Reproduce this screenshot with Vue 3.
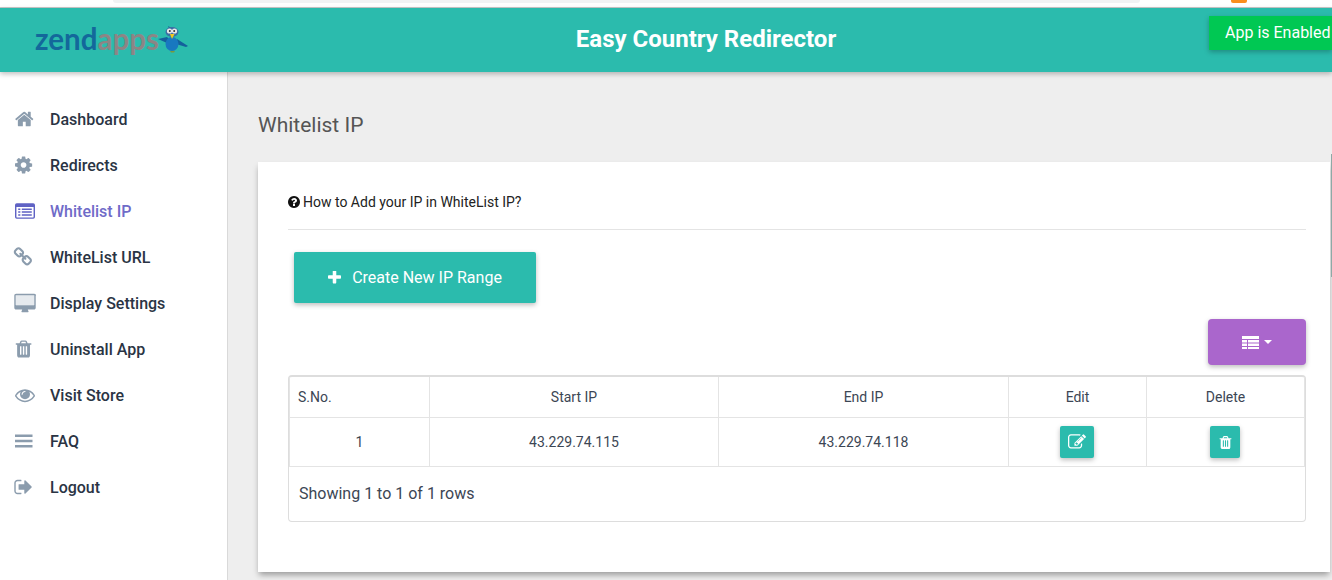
<template>
  <div class="page">
    <div class="topstrip">
      <span class="urlbar"></span>
      <span class="rss"></span>
    </div>
    <header class="topbar">
      <div class="logo">
        <span class="zend">zend</span><span class="apps">apps</span>
        <svg class="bird" width="32" height="30" viewBox="0 0 32 30">
          <path d="M1 16 L10 14 L14 18 L10 20 Z" fill="#14609c" />
          <path d="M20 16 L31 23 L29 24 L19 21 Z" fill="#14609c" />
          <path d="M11 3 L16 6 L13 8 Z" fill="#14609c" />
          <ellipse cx="15" cy="21" rx="6.5" ry="7" fill="#1878c0" />
          <ellipse cx="15" cy="9" rx="6.5" ry="5" fill="#3b6ea5" />
          <circle cx="12.5" cy="8" r="2.6" fill="#e8e8e8" />
          <circle cx="17.5" cy="8" r="2.6" fill="#e8e8e8" />
          <circle cx="12.8" cy="8" r="1" fill="#333" />
          <circle cx="17.2" cy="8" r="1" fill="#333" />
          <path d="M13 11 L17.5 11 L15 16 Z" fill="#f2c81e" />
          <path d="M13 28 L18 28 L17 29.5 L14 29.5 Z" fill="#7b9a3c" />
        </svg>
      </div>
      <h1>Easy Country Redirector</h1>
      <div class="status">App is Enabled</div>
    </header>
    <div class="body">
      <nav class="sidebar">
        <a v-for="item in menu" :key="item.label" class="item" :class="{ active: item.active }">
          <span class="ico">
            <svg width="20" height="20" :viewBox="item.box">
              <rect v-if="item.screen" x="96" y="128" width="1664" height="896" fill="#e6eaee" />
              <path :d="item.d" />
            </svg>
          </span>
          <span>{{ item.label }}</span>
        </a>
      </nav>
      <main class="main">
        <h2>Whitelist IP</h2>
        <section class="card">
          <p class="help">
            <svg width="12" height="12" viewBox="128 128 1536 1536"><path :d="icons.question" fill="#111" /></svg>
            How to Add your IP in WhiteList IP?
          </p>
          <button class="create">
            <svg width="13" height="13" viewBox="192 192 1408 1408"><path :d="icons.plus" fill="#fff" /></svg>
            Create New IP Range
          </button>
          <div class="tools">
            <button class="columns">
              <svg width="17" height="13" viewBox="0 0 17 13">
                <path d="M0 0 H17 V3 H0 Z M0 4 H5 V6.5 H0 Z M6 4 H17 V6.5 H6 Z M0 7.5 H5 V10 H0 Z M6 7.5 H17 V10 H6 Z M0 11 H5 V13 H0 Z M6 11 H17 V13 H6 Z" fill="#fff" />
              </svg>
              <span class="caret"></span>
            </button>
          </div>
          <div class="tablebox">
            <table>
              <colgroup>
                <col style="width: 140px" />
                <col style="width: 289px" />
                <col style="width: 290px" />
                <col style="width: 138px" />
                <col style="width: 158px" />
              </colgroup>
              <thead>
                <tr>
                  <th class="left">S.No.</th>
                  <th>Start IP</th>
                  <th>End IP</th>
                  <th>Edit</th>
                  <th>Delete</th>
                </tr>
              </thead>
              <tbody>
                <tr v-for="row in rows" :key="row.no">
                  <td>{{ row.no }}</td>
                  <td>{{ row.start }}</td>
                  <td>{{ row.end }}</td>
                  <td>
                    <button class="act edit">
                      <svg width="18" height="18" viewBox="0 0 1792 1792"><path :d="icons.edit" fill="#fff" /></svg>
                    </button>
                  </td>
                  <td>
                    <button class="act del">
                      <svg width="15" height="15" viewBox="0 0 1792 1792"><path :d="icons.trash" fill="#fff" /></svg>
                    </button>
                  </td>
                </tr>
              </tbody>
            </table>
            <p class="count">Showing 1 to 1 of 1 rows</p>
          </div>
        </section>
      </main>
    </div>
    <div class="scrollmark"></div>
  </div>
</template>

<script setup>
const icons = {
  home: 'M1472 992v480q0 26-19 45t-45 19h-384v-384h-256v384h-384q-26 0-45-19t-19-45v-480q0-1 .5-3t.5-3l575-474 575 474q1 2 1 6zm223-69l-62 74q-8 9-21 11h-3q-13 0-21-7l-692-577-692 577q-12 8-24 7-13-2-21-11l-62-74q-8-10-7-23.5t11-21.5l719-599q32-26 76-26t76 26l244 204v-195q0-14 9-23t23-9h192q14 0 23 9t9 23v408l219 182q10 8 11 21.5t-7 23.5z',
  cog: 'M1152 896q0-106-75-181t-181-75-181 75-75 181 75 181 181 75 181-75 75-181zm512-109v222q0 12-8 23t-20 13l-185 28q-19 54-39 91 35 50 107 138 10 12 10 25t-9 23q-27 37-99 108t-94 71q-12 0-26-9l-138-108q-44 23-91 38-16 136-29 186-7 28-36 28h-222q-14 0-24.5-8.5t-11.5-21.5l-28-184q-49-16-90-37l-141 107q-10 9-25 9-14 0-25-11-126-114-165-168-7-10-7-23 0-12 8-23 15-21 51-66.5t54-70.5q-27-50-41-99l-183-27q-13-2-21-12.5t-8-23.5v-222q0-12 8-23t19-13l186-28q14-46 39-92-40-57-107-138-10-12-10-24 0-10 9-23 26-36 98.5-107.5t94.5-71.5q13 0 26 10l138 107q44-23 91-38 16-136 29-186 7-28 36-28h222q14 0 24.5 8.5t11.5 21.5l28 184q49 16 90 37l142-107q9-9 24-9 13 0 25 10 129 119 165 170 7 8 7 22 0 12-8 23-15 21-51 66.5t-54 70.5q26 50 41 98l183 28q13 2 21 12.5t8 23.5z',
  list: 'M160 192H1632Q1792 192 1792 352V1440Q1792 1600 1632 1600H160Q0 1600 0 1440V352Q0 192 160 192Z M128 544V1440Q128 1472 160 1472H1632Q1664 1472 1664 1440V544Z M288 672h192v128h-192z M608 672h896v128h-896z M288 928h192v128h-192z M608 928h896v128h-896z M288 1184h192v128h-192z M608 1184h896v128h-896z',
  link: 'M1456 1216q0-40-28-68l-208-208q-28-28-68-28-42 0-72 32 3 3 19 18.5t21.5 21.5 15 19 13 25.5 3.5 27.5q0 40-28 68t-68 28q-15 0-27.5-3.5t-25.5-13-19-15-21.5-21.5-18.5-19q-33 31-33 73 0 40 28 68l206 207q27 27 68 27 40 0 68-26l147-146q28-28 28-67zm-703-705q0-40-28-68l-206-207q-28-28-68-28-39 0-68 27l-147 146q-28 28-28 67 0 40 28 68l208 208q27 27 68 27 42 0 72-31-3-3-19-18.5t-21.5-21.5-15-19-13-25.5-3.5-27.5q0-40 28-68t68-28q15 0 27.5 3.5t25.5 13 19 15 21.5 21.5 18.5 19q33-31 33-73zm895 705q0 120-85 203l-147 146q-83 83-203 83-121 0-204-85l-206-207q-83-83-83-203 0-123 88-209l-88-88q-86 88-208 88-120 0-204-84l-208-208q-84-84-84-204t85-203l147-146q83-83 203-83 121 0 204 85l206 207q83 83 83 203 0 123-88 209l88 88q86-88 208-88 120 0 204 84l208 208q84 84 84 204z',
  desktop: 'M1728 992v-832q0-13-9.5-22.5t-22.5-9.5h-1600q-13 0-22.500 9.500t-9.500 22.500v832q0 13 9.500 22.500t22.500 9.500h1600q13 0 22.500-9.500t9.500-22.500zm128-832v1088q0 66-47 113t-113 47h-544q0 37 16 77.500t32 71 16 43.500q0 26-19 45t-45 19h-512q-26 0-45-19t-19-45q0-14 16-44t32-70 16-78h-544q-66 0-113-47t-47-113v-1088q0-66 47-113t113-47h1632q66 0 113 47t47 113z',
  trash: 'M704 1376v-704q0-14-9-23t-23-9h-64q-14 0-23 9t-9 23v704q0 14 9 23t23 9h64q14 0 23-9t9-23zm256 0v-704q0-14-9-23t-23-9h-64q-14 0-23 9t-9 23v704q0 14 9 23t23 9h64q14 0 23-9t9-23zm256 0v-704q0-14-9-23t-23-9h-64q-14 0-23 9t-9 23v704q0 14 9 23t23 9h64q14 0 23-9t9-23zm-544-992h448l-48-117q-7-9-17-11h-317q-10 2-17 11zm928 32v64q0 14-9 23t-23 9h-96v948q0 83-47 143.500t-113 60.500h-832q-66 0-113-58.500t-47-141.500v-952h-96q-14 0-23-9t-9-23v-64q0-14 9-23t23-9h309l70-167q15-37 54-63t79-26h320q40 0 79 26t54 63l70 167h309q14 0 23 9t9 23z',
  eye: 'M1664 960q-152-236-381-353 61 104 61 225 0 185-131.500 316.500t-316.500 131.500-316.500-131.500-131.500-316.500q0-121 61-225-229 117-381 353 133 205 333.500 326.500t434.500 121.500 434.500-121.500 333.500-326.500zm-720-384q0-20-14-34t-34-14q-125 0-214.500 89.500t-89.500 214.500q0 20 14 34t34 14 34-14 14-34q0-86 61-147t147-61q20 0 34-14t14-34zm848 384q0 34-20 69-140 230-376.500 368.500t-499.500 138.500-499.500-139-376.500-368q-20-35-20-69t20-69q140-229 376.500-368t499.500-139 499.500 139 376.500 368q20 35 20 69z',
  bars: 'M0 320H1568V544H0Z M0 784H1568V1008H0Z M0 1248H1568V1472H0Z',
  signout: 'M704 1440q0 4 1 20t.5 26.500-3 23.500-10 19.500-20.500 6.500h-320q-119 0-203.500-84.500t-84.500-203.500v-704q0-119 84.500-203.500t203.500-84.500h320q13 0 22.500 9.500t9.500 22.500q0 4 1 20t.5 26.500-3 23.500-10 19.500-20.500 6.500h-320q-66 0-113 47t-47 113v704q0 66 47 113t113 47h312l11.500 1 11.500 3 8 5.500 7 9 2 13.500zm928-544q0 26-19 45l-544 544q-19 19-45 19t-45-19-19-45v-288h-448q-26 0-45-19t-19-45v-384q0-26 19-45t45-19h448v-288q0-26 19-45t45-19 45 19l544 544q19 19 19 45z',
  question: 'M1024 1376v-192q0-14-9-23t-23-9h-192q-14 0-23 9t-9 23v192q0 14 9 23t23 9h192q14 0 23-9t9-23zm256-672q0-88-55.500-163t-138.500-116-170-41q-243 0-371 213-15 24 8 42l132 100q7 6 19 6 16 0 25-12 53-68 86-92 34-24 86-24 48 0 85.500 26t37.500 59q0 38-20 61t-68 45q-63 28-115.500 86.500t-52.500 125.500v36q0 14 9 23t23 9h192q14 0 23-9t9-23q0-19 21.500-49.500t54.500-49.500q32-18 49-28.500t46-35 44.500-48 28-60.500 12.500-81zm384 192q0 209-103 385.500t-279.500 279.500-385.500 103-385.500-103-279.500-279.500-103-385.500 103-385.500 279.500-279.500 385.500-103 385.500 103 279.500 279.500 103 385.500z',
  plus: 'M1600 736v192q0 40-28 68t-68 28h-416v416q0 40-28 68t-68 28h-192q-40 0-68-28t-28-68v-416h-416q-40 0-68-28t-28-68v-192q0-40 28-68t68-28h416v-416q0-40 28-68t68-28h192q40 0 68 28t28 68v416h416q40 0 68 28t28 68z',
  edit: 'M888 1184l116-116-152-152-116 116v56h96v96h56zm440-720q-16-16-33 1l-350 350q-17 17-1 33t33-1l350-350q17-17 1-33zm80 594v190q0 119-84.500 203.500t-203.500 84.500h-832q-119 0-203.500-84.500t-84.500-203.500v-832q0-119 84.500-203.500t203.500-84.500h832q63 0 117 25 15 7 18 23 3 17-9 29l-49 49q-14 14-32 8-23-6-45-6h-832q-66 0-113 47t-47 113v832q0 66 47 113t113 47h832q66 0 113-47t47-113v-126q0-13 9-22l64-64q15-15 35-7t20 29zm-96-738l288 288-672 672h-288v-288zm444 132l-92 92-288-288 92-92q28-28 68-28t68 28l152 152q28 28 28 68t-28 68z',
}

const menu = [
  { label: 'Dashboard', box: '64 0 1792 1792', d: icons.home },
  { label: 'Redirects', box: '128 0 1792 1792', d: icons.cog },
  { label: 'Whitelist IP', box: '0 0 1792 1792', d: icons.list, active: true },
  { label: 'WhiteList URL', box: '128 0 1792 1792', d: icons.link },
  { label: 'Display Settings', box: '0 -64 1792 1792', d: icons.desktop, screen: true },
  { label: 'Uninstall App', box: '128 0 1792 1792', d: icons.trash },
  { label: 'Visit Store', box: '0 0 1792 1792', d: icons.eye },
  { label: 'FAQ', box: '0 0 1792 1792', d: icons.bars },
  { label: 'Logout', box: '128 0 1792 1792', d: icons.signout },
]

const rows = [{ no: 1, start: '43.229.74.115', end: '43.229.74.118' }]
</script>

<style>
html,
body {
  margin: 0;
  height: 100%;
  overflow: hidden;
}
</style>

<style scoped>
.page {
  position: relative;
  width: 1332px;
  height: 580px;
  overflow: hidden;
  display: flex;
  flex-direction: column;
  font-family: Roboto, "Liberation Sans", sans-serif;
  background: #fff;
}

.topstrip {
  height: 7px;
  flex: none;
  display: flex;
  justify-content: space-between;
  background: #fff;
  border-bottom: 1px solid #c9c9c9;
}

.urlbar {
  width: 1027px;
  height: 3px;
  margin-left: 113px;
  background: #f1f3f4;
  border-radius: 0 0 12px 12px;
}

.rss {
  width: 16px;
  height: 3px;
  margin-right: 85px;
  background: #f98e1d;
  border-radius: 0 0 2px 2px;
}

.topbar {
  height: 64px;
  flex: none;
  position: relative;
  z-index: 2;
  background: #2bbbad;
  box-shadow: 0 2px 5px rgba(0, 0, 0, 0.26);
  display: flex;
  align-items: center;
  justify-content: center;
}

.topbar h1 {
  margin: 0 0 2px 80px;
  font-size: 24px;
  font-weight: 700;
  color: #fff;
}

.logo {
  position: absolute;
  left: 35px;
  top: 14px;
  display: flex;
  align-items: center;
  font-family: Lato, sans-serif;
  font-size: 29.5px;
  line-height: 34px;
  font-weight: 700;
}

.zend {
  color: #13689b;
}

.apps {
  color: #8c8585;
}

.bird {
  margin-left: -2px;
  margin-top: -3px;
}

.status {
  position: absolute;
  right: 0;
  top: 8px;
  width: 123px;
  height: 34px;
  box-sizing: border-box;
  padding-left: 16px;
  line-height: 33px;
  font-size: 16px;
  color: #fff;
  background: #00c853;
  white-space: nowrap;
  box-shadow: 0 2px 5px rgba(0, 0, 0, 0.26);
}

.body {
  flex: 1;
  display: flex;
  min-height: 0;
}

.sidebar {
  width: 227px;
  flex: none;
  padding-top: 24px;
  background: #fff;
  border-right: 1px solid #d9d9d9;
}

.item {
  height: 46px;
  display: flex;
  align-items: center;
  padding-left: 15px;
  font-size: 16px;
  font-weight: 500;
  color: #2a3444;
}

.item.active {
  color: #6f6bc8;
}

.ico {
  width: 35px;
  height: 20px;
  flex: none;
}

.ico svg {
  display: block;
  overflow: visible;
  fill: #8b9cad;
}

.item.active .ico svg {
  fill: #5f62c4;
}

.main {
  flex: 1;
  min-width: 0;
  padding-left: 30px;
  background: #eeeeee;
}

h2 {
  margin: 42px 0 25px;
  font-size: 21px;
  line-height: 23px;
  font-weight: 400;
  color: #555;
}

.card {
  width: 1072px;
  height: 410px;
  box-sizing: border-box;
  padding: 30px 24px 0 30px;
  background: #fff;
  box-shadow: 0 4px 6px -1px rgba(0, 0, 0, 0.35);
}

.help {
  margin: 0;
  height: 37px;
  display: flex;
  align-items: flex-start;
  gap: 3px;
  font-size: 14px;
  line-height: 21px;
  color: #222;
  border-bottom: 1px solid #e4e4e4;
}

.help svg {
  margin-top: 4px;
}

button {
  border: 0;
  padding: 0;
  font-family: inherit;
  color: #fff;
  display: flex;
  align-items: center;
  justify-content: center;
}

.create {
  width: 242px;
  height: 51px;
  margin: 22px 0 0 6px;
  gap: 11px;
  font-size: 16px;
  background: #2bbbad;
  border-radius: 2px;
  box-shadow: 0 2px 5px rgba(0, 0, 0, 0.26);
}

.tools {
  display: flex;
  justify-content: flex-end;
  margin-top: 16px;
}

.columns {
  width: 98px;
  height: 46px;
  gap: 5px;
  background: #aa66cc;
  border-radius: 4px;
  box-shadow: 0 2px 5px rgba(0, 0, 0, 0.26);
}

.caret {
  width: 0;
  height: 0;
  border: 4px solid transparent;
  border-top-color: #fff;
  border-bottom: 0;
}

.tablebox {
  margin-top: 10px;
  border: 1px solid #dddddd;
  border-top-width: 2px;
  border-radius: 4px;
  height: 147px;
  box-sizing: border-box;
}

table {
  width: 1015px;
  border-collapse: collapse;
  table-layout: fixed;
  font-size: 14px;
  color: #3c4654;
}

th,
td {
  text-align: center;
  font-weight: 400;
  border: 1px solid #e4e4e4;
  padding: 0;
}

th {
  height: 40px;
}

td {
  height: 48px;
}

th.left {
  text-align: left;
  padding-left: 8px;
}

thead th {
  border-top: 0;
}

.act {
  height: 32px;
  background: #2bbbad;
  border-radius: 2px;
  box-shadow: 0 2px 5px rgba(0, 0, 0, 0.26);
}

.edit {
  width: 34px;
  margin-left: 51px;
}

.del {
  width: 30px;
  margin-left: 63px;
}

.count {
  margin: 17px 0 0 10px;
  font-size: 16px;
  line-height: 20px;
  color: #3c4654;
}

.scrollmark {
  position: absolute;
  right: 0;
  top: 154px;
  width: 1px;
  height: 123px;
  background: #8fa9a6;
}
</style>
